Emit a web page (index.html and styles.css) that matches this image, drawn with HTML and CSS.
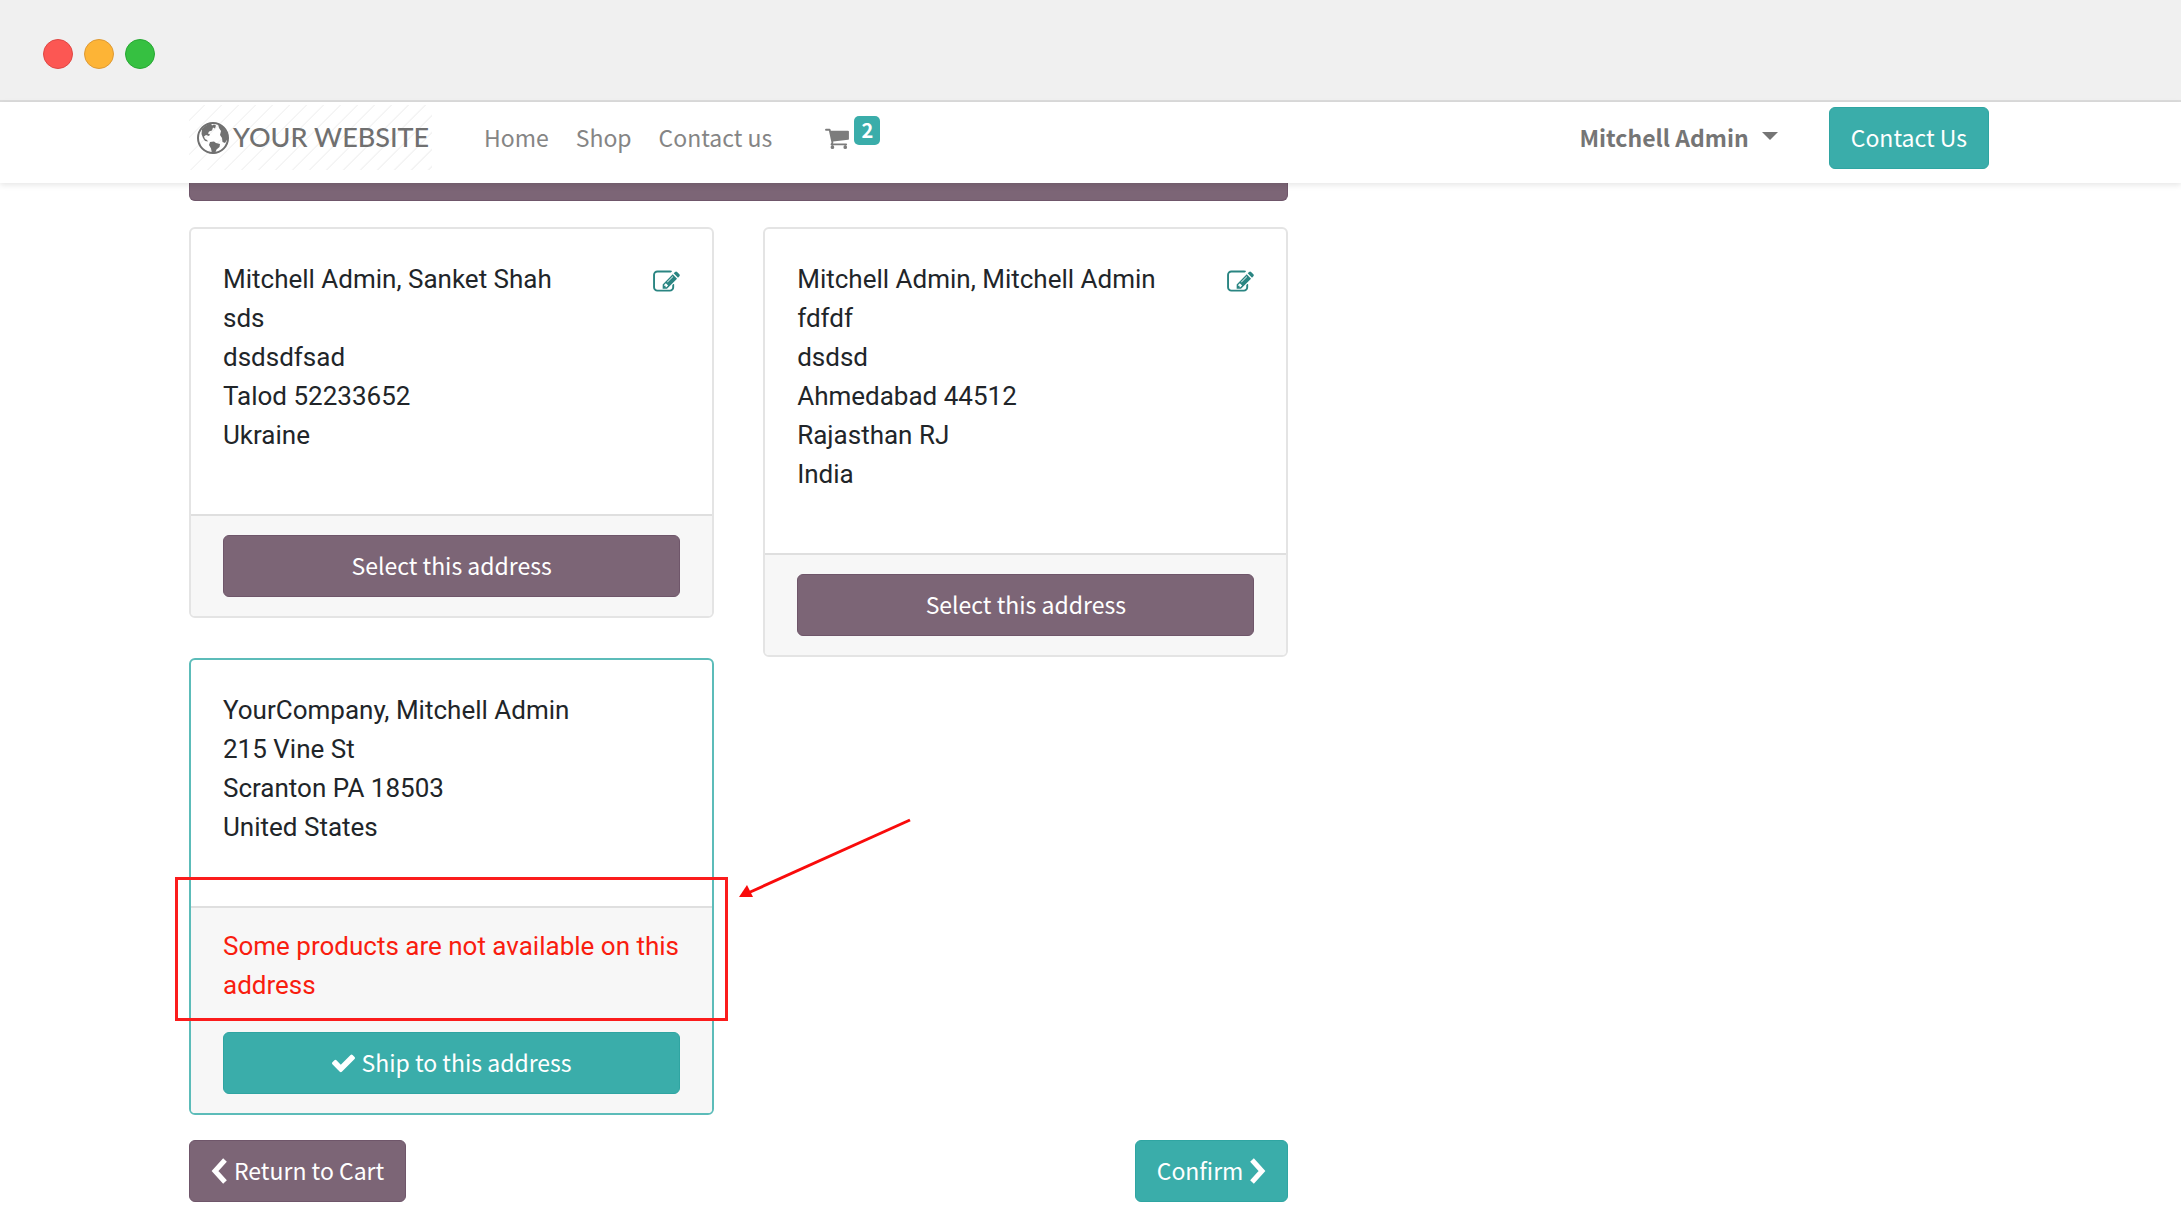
FILE: index.html
```html
<!DOCTYPE html>
<html lang="en">
<head>
<meta charset="utf-8">
<meta name="viewport" content="width=device-width, initial-scale=1">
<title>Shipping Address | Your Website</title>
<link rel="stylesheet" href="styles.css">
</head>
<body>
<div class="window-bar" aria-hidden="true">
  <span class="dot dot-close"></span>
  <span class="dot dot-minimize"></span>
  <span class="dot dot-zoom"></span>
</div>

<header class="navbar">
  <a class="logo" href="#">
    <svg class="logo-globe" viewBox="0 0 34 34" aria-hidden="true">
      <circle cx="17" cy="17" r="15" fill="none" stroke="currentColor" stroke-width="2"/>
      <path fill="currentColor" d="M6 8c3-3.500 6-5 9-5.500l1 2 2-1 2 1-1 3-2-1-1 3-3 1-1 2 2 1-1 1.500-3-1-2 1.500 1 2.500 2 1 1 1.500-3-.5-2-3-1.500-4zM14 21l4-.5 2 1.500 4 1-.5 3-3 2.500-1.500 4h-3l-1-5-2-3.500zM22 3l5 3 4 6 .5 6-2.500 4-2.500-1-.5-4-2-3 1-4-2-3z"/>
    </svg>
    <span class="logo-text">YOUR WEBSITE</span>
  </a>
  <nav class="menu">
    <a href="#">Home</a>
    <a href="#">Shop</a>
    <a href="#">Contact us</a>
    <a class="cart" href="#" aria-label="Cart, 2 items">
      <svg class="cart-icon" viewBox="0 0 1664 1536" aria-hidden="true"><path fill="currentColor" d="M640 1408a128 128 0 1 1-256 0a128 128 0 1 1 256 0zM1536 1408a128 128 0 1 1-256 0a128 128 0 1 1 256 0zM1664 320v512q0 24-16.500 42.500t-40.500 21.500l-1044 122q13 60 13 70q0 16-24 64h920q26 0 45 19t19 45t-19 45t-45 19H448q-26 0-45-19t-19-45q0-11 8-31.500t16-36t21.500-40t15.500-29.500L268 256H64q-26 0-45-19T0 192t19-45t45-19h256q16 0 28.500 6.500t19.500 15.500t13 24.500t8 26t5.500 29.500t4.500 26h1201q26 0 45 19t19 45z"/></svg>
      <span class="badge">2</span>
    </a>
  </nav>
  <button class="user-menu" type="button" aria-haspopup="true">Mitchell Admin<span class="caret"></span></button>
  <a class="btn btn-primary" href="#">Contact Us</a>
</header>

<main class="page">
  <div class="checkout">
    <div class="add-address"></div>
    <div class="columns">
      <div class="column">
        <article class="card">
          <div class="card-body">
            <address>Mitchell Admin, Sanket Shah<br>sds<br>dsdsdfsad<br>Talod 52233652<br>Ukraine</address>
            <a class="edit" href="#" aria-label="Edit this address">
              <svg viewBox="0 0 1792 1536" aria-hidden="true"><path fill="currentColor" d="M888 1056l116-116l-152-152l-116 116v56h96v96h56zM1328 336q-16-16-33 1L945 687q-17 17-1 33t33-1l350-350q17-17 1-33zM1408 866v190q0 119-84.500 203.500T1120 1344H288q-119 0-203.500-84.500T0 1056V224Q0 105 84.500 20.500T288-64h832q63 0 117 25q15 7 18 23q3 17-9 29l-49 49q-14 14-32 8q-23-6-45-6H288q-66 0-113 47t-47 113v832q0 66 47 113t113 47h832q66 0 113-47t47-113V930q0-13 9-22l64-64q15-15 35-7t20 29zM1312 192l288 288l-672 672H640V864zM1756 324l-92 92l-288-288l92-92q28-28 68-28t68 28l152 152q28 28 28 68t-28 68z" transform="translate(0 96)"/></svg>
            </a>
          </div>
          <div class="card-footer"><button class="btn btn-secondary btn-block" type="button">Select this address</button></div>
        </article>
        <article class="card card-selected">
          <div class="card-body">
            <address>YourCompany, Mitchell Admin<br>215 Vine St<br>Scranton PA 18503<br>United States</address>
          </div>
          <div class="card-footer">
            <p class="warning">Some products are not available on this address</p>
            <button class="btn btn-primary btn-block" type="button">
              <svg class="icon-check" viewBox="121 313 1550 1188" aria-hidden="true"><path fill="currentColor" d="M1671 566q0 40-28 68l-724 724l-136 136q-28 28-68 28t-68-28l-136-136l-362-362q-28-28-28-68t28-68l136-136q28-28 68-28t68 28l294 295l656-657q28-28 68-28t68 28l136 136q28 28 28 68z"/></svg>
              Ship to this address
            </button>
          </div>
          <div class="highlight"></div>
          <svg class="arrow" viewBox="0 0 174 82" aria-hidden="true"><path d="M172 2L10 75" stroke="#f90b0b" stroke-width="3" fill="none"/><path d="M1 79L9 67L15 79Z" fill="#f90b0b"/></svg>
        </article>
      </div>
      <div class="column">
        <article class="card">
          <div class="card-body">
            <address>Mitchell Admin, Mitchell Admin<br>fdfdf<br>dsdsd<br>Ahmedabad 44512<br>Rajasthan RJ<br>India</address>
            <a class="edit" href="#" aria-label="Edit this address">
              <svg viewBox="0 0 1792 1536" aria-hidden="true"><path fill="currentColor" d="M888 1056l116-116l-152-152l-116 116v56h96v96h56zM1328 336q-16-16-33 1L945 687q-17 17-1 33t33-1l350-350q17-17 1-33zM1408 866v190q0 119-84.500 203.500T1120 1344H288q-119 0-203.500-84.500T0 1056V224Q0 105 84.500 20.500T288-64h832q63 0 117 25q15 7 18 23q3 17-9 29l-49 49q-14 14-32 8q-23-6-45-6H288q-66 0-113 47t-47 113v832q0 66 47 113t113 47h832q66 0 113-47t47-113V930q0-13 9-22l64-64q15-15 35-7t20 29zM1312 192l288 288l-672 672H640V864zM1756 324l-92 92l-288-288l92-92q28-28 68-28t68 28l152 152q28 28 28 68t-28 68z" transform="translate(0 96)"/></svg>
            </a>
          </div>
          <div class="card-footer"><button class="btn btn-secondary btn-block" type="button">Select this address</button></div>
        </article>
      </div>
    </div>
    <div class="actions">
      <a class="btn btn-secondary" href="#">
        <svg class="icon-chevron" viewBox="0 0 16 26" aria-hidden="true"><path d="M14 2L4 13L14 24" fill="none" stroke="currentColor" stroke-width="5"/></svg>
        Return to Cart
      </a>
      <a class="btn btn-primary" href="#">
        Confirm
        <svg class="icon-chevron" viewBox="0 0 16 26" aria-hidden="true"><path d="M2 2L12 13L2 24" fill="none" stroke="currentColor" stroke-width="5"/></svg>
      </a>
    </div>
  </div>
</main>
</body>
</html>
```

FILE: styles.css
```css
:root {
  --teal: #3aadaa;
  --purple: #7c6576;
  --source: "Source Sans Pro", "Noto Sans CJK SC", sans-serif;
}

* { box-sizing: border-box; }

body {
  margin: 0;
  background: #fff;
  color: #212529;
  font: 26px/39px Roboto, sans-serif;
}

a { color: inherit; text-decoration: none; }

.window-bar {
  display: flex;
  align-items: center;
  gap: 11px;
  height: 102px;
  padding: 8px 43px 0;
  background: #f0f0f0;
  border-bottom: 2px solid #dcdcdc;
}

.dot {
  width: 30px;
  height: 30px;
  border: 1px solid;
  border-radius: 50%;
}
.dot-close { background: #fc5753; border-color: #df4744; }
.dot-minimize { background: #fdb436; border-color: #de9a34; }
.dot-zoom { background: #36c041; border-color: #27a833; }

.navbar {
  display: flex;
  align-items: center;
  padding: 3px 192px 13px 189px;
  position: relative;
  box-shadow: 0 2px 6px rgba(0, 0, 0, 0.1);
  background: #fff;
  color: #858585;
  font-family: var(--source);
  font-size: 23px;
}

.logo {
  display: flex;
  align-items: center;
  height: 65px;
  width: 243px;
  padding-left: 7px;
  gap: 3px;
  color: #707070;
  background: repeating-linear-gradient(135deg, #fff 0 10px, #f4f4f4 11px 12px);
}
.logo-globe { width: 34px; height: 34px; flex: none; }
.logo-text { padding-bottom: 2px; font: 500 27px/34px Lato, sans-serif; white-space: nowrap; }

.menu {
  display: flex;
  align-items: center;
  gap: 27px;
  margin: 0 auto 0 52px;
}

.cart { display: flex; height: 43px; margin-left: 26px; gap: 5px; }
.cart-icon { width: 24px; height: 22px; margin-top: 11px; color: #7c7c7c; }
.badge {
  width: 26px;
  height: 29px;
  border-radius: 5px;
  background: var(--teal);
  color: #fff;
  font-size: 20px;
  font-weight: 700;
  line-height: 28px;
  text-align: center;
}

.user-menu {
  display: flex;
  align-items: center;
  gap: 13px;
  margin-right: 51px;
  padding: 0;
  border: 0;
  background: none;
  color: #757575;
  font: 700 23px/39px var(--source);
}
.caret {
  margin-bottom: 3px;
  border: 8px solid transparent;
  border-top-color: currentColor;
  border-bottom: 0;
}

.btn {
  display: inline-flex;
  align-items: center;
  justify-content: center;
  gap: 7px;
  height: 62px;
  padding: 0 21px 1px;
  border: 1px solid transparent;
  border-radius: 6px;
  color: #fff;
  font: 23px/39px var(--source);
}
.btn-primary { background: var(--teal); border-color: #2fa5a2; }
.btn-secondary { background: var(--purple); border-color: #6f566a; }
.btn-block { width: 100%; }
.icon-check { width: 23px; height: 20px; }
.icon-chevron { width: 16px; height: 26px; }

.page {
  display: grid;
  grid-template-columns: 11fr 7fr;
  padding: 0 193px 27px 189px;
}

.add-address {
  height: 18px;
  border: 1px solid #6f566a;
  border-top: 0;
  border-radius: 0 0 6px 6px;
  background: var(--purple);
}

.columns {
  display: grid;
  grid-template-columns: 1fr 1fr;
  gap: 49px;
  padding-top: 26px;
}
.column { display: flex; flex-direction: column; gap: 40px; }

.card {
  position: relative;
  border: 2px solid #e4e4e4;
  border-radius: 6px;
}
.card-selected { border-color: #5cbcb9; }

.card-body {
  display: flex;
  justify-content: space-between;
  padding: 31px 32px 59px;
}
address { font-style: normal; }
.edit { margin-top: 10px; height: 24px; line-height: 0; color: #2a8582; }
.edit svg { width: 27px; height: 23px; }

.card-footer {
  padding: 19px 32px;
  border-top: 2px solid #dfdfdf;
  border-radius: 0 0 4px 4px;
  background: #f7f7f7;
}
.warning { margin: 0 0 27px; color: #f91d0f; }

.highlight {
  position: absolute;
  inset: 217px -16px 92px -16px;
  border: 3px solid #fb1c1c;
}
.arrow {
  position: absolute;
  left: calc(100% + 26px);
  top: 158px;
  width: 174px;
  height: 82px;
}

.actions {
  display: flex;
  justify-content: space-between;
  padding-top: 25px;
}
```
